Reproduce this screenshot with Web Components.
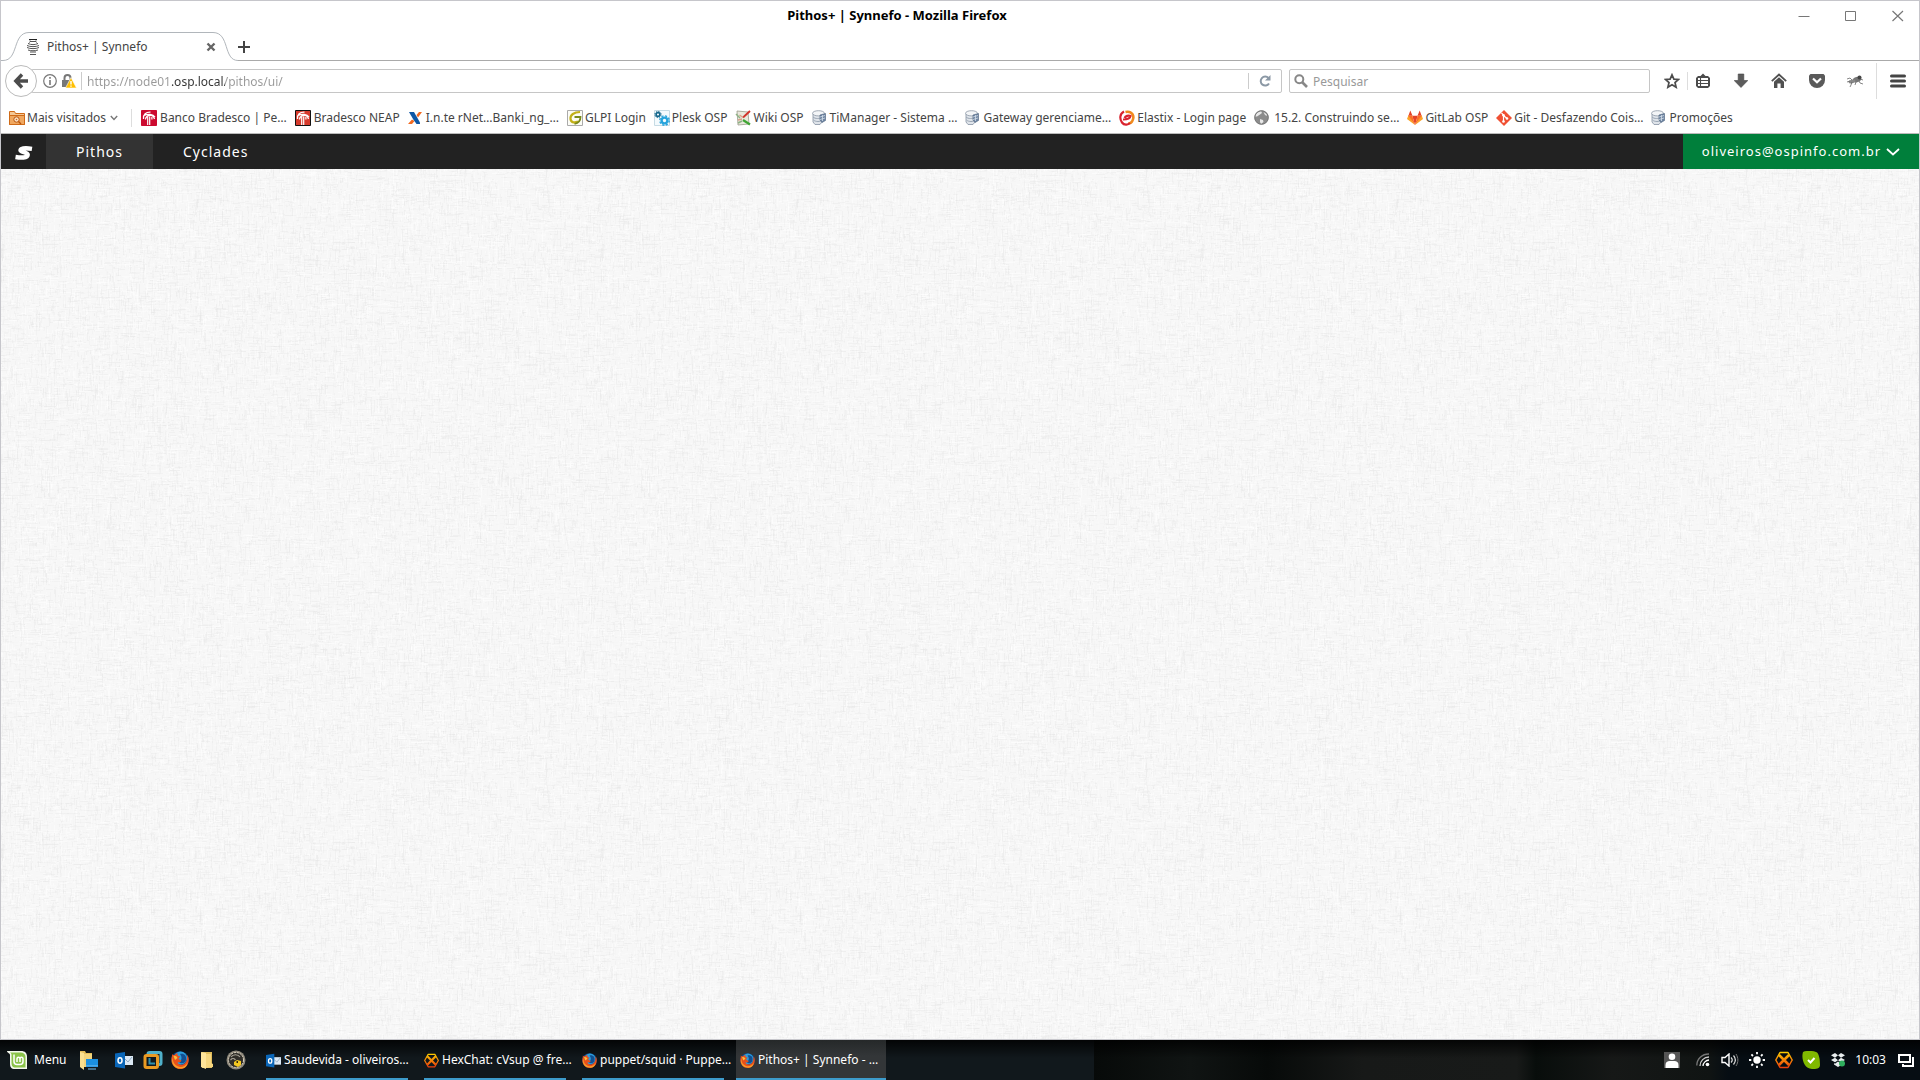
<!DOCTYPE html>
<html lang="pt-BR">
<head>
<meta charset="utf-8">
<title>Pithos+ | Synnefo</title>
<style>
html,body{height:100%;margin:0}
body{font:12px/16px "Noto Sans","Open Sans",sans-serif;color:#444;background:#0f1619;overflow:hidden}
</style>
</head>
<body>
<desk-top></desk-top>
<script>
const svg=(w,h,body)=>`<svg width="${w}" height="${h}" viewBox="0 0 ${w} ${h}" aria-hidden="true">${body}</svg>`;
const bradesco=(bg,edge)=>svg(16,16,`<path fill="${bg}" stroke="${edge}" d="M.5.5h15v15H.5z"/><path fill="none" stroke="#fff" stroke-width="1.300" d="M2.500 9C2 4.500 5 2 9.500 2.200M4.500 9.500C5 5 12 3.500 13.500 9M3 5.500C7 3.500 12 4 14 7"/><path fill="none" stroke="#fff" stroke-width="1.200" d="M6.700 7v8M8.700 6.500V15M10.900 7v2.500"/>`);
const barrel=svg(16,16,`<path fill="#dfe4ea" stroke="#8592a2" stroke-width=".8" d="M1 4v8l2 2.500h5l2-2.500V4z"/><ellipse cx="6.500" cy="3.300" rx="6" ry="2.600" fill="#f3f5f7" stroke="#8d98a6" stroke-width=".8"/><path fill="none" stroke="#9aa6b4" d="M1 7c2 2 7 2 9 0M1.500 10c2 2 7 2 8.500 0"/><path fill="#6f86a3" stroke="#4c617d" stroke-width=".6" d="M8 5l5.500-1.500v7L10 12.500 8 10z"/><path stroke="#d3dde8" stroke-width=".8" d="M8 7l5-1.500M8 9.500L13 8M10.500 5v6"/>`);
const outlook=s=>svg(s,s,`<g transform="scale(${s/18})"><path fill="#dce9f5" d="M9 5h9v9H9z"/><path fill="none" stroke="#8fa9c2" d="M10 8l3 3 4-5"/><path fill="#0a66b8" d="M0 2.500L10 1v16.500L0 16z"/><ellipse cx="5" cy="9.500" rx="2" ry="2.700" fill="none" stroke="#fff" stroke-width="1.500"/></g>`);
const firefox=s=>svg(s,s,`<g transform="scale(${s/18})"><circle cx="9" cy="9" r="8.700" fill="#0c4a8c"/><circle cx="9.500" cy="7" r="6.500" fill="#2d9edb"/><path fill="#124f91" d="M9 3c4-1 7 2 6 6s-5 4-7 2c2-1 4-4 1-8z"/><path fill="#e8501c" d="M1 3c0 2 0 2-.5 4C-.5 13 4 18 9 18c5 0 9-4 8.700-10C17.500 6 17 5 16 4c.5 3 0 8-4 9.500-3 1-5-.5-5.500-2l3-.5 1-1.500-3-1.500C8 6.500 9 6 9.300 5.500 7 5.500 6 4 6.500 2 5 2.500 4 3.500 3.500 4 2.500 4 1.500 4 1 3z"/><path fill="#fb9d25" d="M2 6c-1 5 2 9 7 10 4 0 6-2 7.500-4-1 5-5 6-8 5.500C4 17 1 14 1 9z"/><path fill="#f8c13c" d="M2.500 5c2-.5 3 .5 4 2L4 9z"/></g>`);
const hex=s=>svg(s,s,`<defs><linearGradient id="h" gradientUnits="userSpaceOnUse" x1="0" x2="0" y1="1" y2="17"><stop stop-color="#ffcf00"/><stop offset="1" stop-color="#ee3a0c"/></linearGradient></defs><g transform="scale(${s/18})" fill="none" stroke="url(#h)"><path stroke-width="1.500" stroke-linejoin="round" d="M5 1.500h8L17.200 9 13 16.500H5L.8 9z"/><path stroke-width="2.600" d="M4 4l10 10M14 4L4 14"/></g>`);
const ICONS={
pithos:svg(14,16,`<g fill="none" stroke="#555"><path stroke="#222" d="M3 .5h8"/><path d="M4 2.500h6M2 4.500C5 6 9 6 12 4.500M1 6.500C4 8 10 8 13 6.500M1 8.500c3 1.500 9 1.500 12 0M2 11c3 1 7 1 10 0M4 13h6M4 15.500h6"/><path stroke-width=".6" d="M4 1v2L2 5M10 1v2l2 2"/></g>`),
x:svg(10,10,`<path stroke="#666" stroke-width="2.400" d="M1.500 1.500l7 7M8.500 1.500l-7 7"/>`),
plus:svg(12,12,`<path stroke="#444" stroke-width="2" d="M6 0v12M0 6h12"/>`),
back:svg(16,16,`<path fill="none" stroke="#4c4c4c" stroke-width="3.400" d="M9 1.500L2.800 8 9 14.500M3 8h12"/>`),
info:svg(14,14,`<circle cx="7" cy="7" r="6.300" fill="none" stroke="#777" stroke-width="1.200"/><path fill="#777" d="M6.200 6h1.600v5H6.200zM6.200 3h1.600v1.700H6.200z"/>`),
lock:svg(16,14,`<path fill="none" stroke="#777" stroke-width="2" d="M3.500 6V4c0-4 6-4 6 0v2"/><path fill="#777" d="M1 6h10v7H1z"/><path fill="#ffbf00" stroke="#fff" stroke-width=".6" d="M10 3.500L15.500 14h-11z"/><path stroke="#fff" stroke-width="1.400" d="M10 7v3.500M10 11.500v1.300"/>`),
reload:svg(12,12,`<path fill="none" stroke="#8b98a5" stroke-width="2" d="M9.500 3A4.500 4.500 0 1 0 10 8.500"/><path fill="#8b98a5" d="M11.500 0v5.500H6z"/>`),
search:svg(14,14,`<circle cx="5.300" cy="5.300" r="4" fill="none" stroke="#888" stroke-width="2"/><path stroke="#888" stroke-width="2.600" d="M8 8l5 5"/>`),
star:svg(16,16,`<path fill="none" stroke="#4c4c4c" stroke-width="1.700" d="M8 1.800l1.900 4.300 4.600.4-3.500 3 1.100 4.700L8 11.700l-4.100 2.500L5 9.500l-3.500-3 4.600-.4z"/>`),
list:svg(16,16,`<path fill="#4c4c4c" fill-rule="evenodd" d="M3 3h2.500L8 .5 10.500 3H13l2 2v8l-2 2H3l-2-2V5zm0 2v8h10V5z"/><path fill="none" stroke="#4c4c4c" stroke-width="1.100" d="M3 7.500h10M3 10.500h10M5.500 5v8"/>`),
down:svg(14,16,`<path fill="#5c5c5c" stroke="#444" stroke-width=".6" d="M4.200 1h5.600v6.500h4L7 14.500.2 7.500h4z"/>`),
home:svg(16,16,`<path fill="none" stroke="#505050" stroke-width="1.800" d="M.8 8.200L8 1.500l7.200 6.700"/><path fill="#505050" d="M3 8.800l5-4.600 5 4.600V15H9.600v-4.500H6.400V15H3z"/>`),
pocket:svg(16,16,`<path fill="#5a5a5a" d="M1.500 1h13L16 2.500V7a8 8 0 0 1-16 0V2.500z"/><path fill="none" stroke="#fff" stroke-width="2.200" d="M4 5.500L8 9.300l4-3.800"/>`),
bug:svg(16,14,`<ellipse cx="10" cy="5.500" rx="4.500" ry="2.600" transform="rotate(-20 10 5.500)" fill="#777"/><circle cx="12.500" cy="3.500" r="2" fill="#444"/><ellipse cx="5" cy="7.500" rx="3.500" ry="1.800" transform="rotate(-15 5 7.500)" fill="#888"/><path fill="none" stroke="#666" stroke-width=".8" d="M5 8l-1 3-1 2M9 8l-1 3M12 7l1 2 3 1M5 6L3 4 0 5M3 7L0 8M13 5l3 1"/>`),
menu:svg(16,14,`<path stroke="#444" stroke-width="3" stroke-linecap="round" d="M1.500 2h13M1.500 7h13M1.500 12h13"/>`),
min:svg(12,12,`<path stroke="#777" d="M.5 6.500h11"/>`),
max:svg(12,12,`<path fill="none" stroke="#777" d="M.5 1.500h10v9H.5z"/>`),
close:svg(12,12,`<path stroke="#777" stroke-width="1.200" d="M.5 1l10.500 10M11 1L.5 11"/>`),
folder:svg(16,16,`<path fill="#f4c896" stroke="#cf6a17" d="M.5 1.500h5l1 2h9v11H.5z"/><path fill="#f0a860" stroke="#cf6a17" d="M.5 5.500h15v9H.5z"/><circle cx="7.500" cy="9.500" r="2.700" fill="#fbe3c8" stroke="#b9540c"/><circle cx="7.500" cy="9.500" r=".8" fill="#cf6a17"/><path stroke="#b9540c" stroke-width="1.400" d="M9.500 11.500l2.500 2.500"/>`),
chev:svg(8,6,`<path fill="none" stroke="#777" stroke-width="1.400" d="M.8 1L4 4.400 7.200 1"/>`),
bra1:bradesco('#cc092f','#cc092f'),bra2:bradesco('#d63a2c','#111'),
itau:svg(14,14,`<path fill="#f26a21" d="M8.500 4l2.500-3h3l-4 5.500zM0 13l4-4.500L6.500 10 4 13z"/><path fill="#0d57a6" d="M1 1h5l2 3.500 4 7V13H8.500L5 8z"/>`),
glpi:svg(16,16,`<path fill="#fcfcf6" stroke="#aaa" d="M.5.5h15v15H.5z"/><path fill="none" stroke="#c2b019" stroke-width="2.200" d="M13 2C7 2 3 5 3.500 9S8 13 11 11.500"/><path fill="none" stroke="#79891a" stroke-width="1.800" d="M7.500 7h6c0 3-2 6-6 7"/>`),
plesk:svg(16,16,`<path fill="#f4fafd" stroke="#c6dbe4" d="M.5.5h15v15H.5z"/><circle cx="4" cy="4.500" r="1.900" fill="none" stroke="#14678c" stroke-width="1.600"/><circle cx="4" cy="4.500" r="3.100" fill="none" stroke="#14678c" stroke-dasharray="1.300 1.130"/><circle cx="10.500" cy="10.500" r="2.900" fill="none" stroke="#27a4dc" stroke-width="2.400"/><circle cx="10.500" cy="10.500" r="4.700" fill="none" stroke="#27a4dc" stroke-width="1.400" stroke-dasharray="2.100 1.590"/>`),
wiki:svg(16,16,`<path fill="#e9e9dd" stroke="#9a9a8a" stroke-width=".8" d="M2 1l11 1 1 12-11 1z"/><path stroke="#8fb386" stroke-width="1.500" d="M1 4l4 4M3 13l4-2"/><path stroke="#d2322a" stroke-width="1.900" d="M15 1L8 7.500"/><path stroke="#d9a08a" stroke-width="1.500" fill="none" d="M8 7.500L4.500 5M3 10l4-1"/><path stroke="#3fa535" stroke-width="2.200" d="M8 10l7 4.500"/>`),
barrel,
elastix:svg(16,16,`<path fill="none" stroke="#f08a1d" stroke-width="2.600" d="M6.500 2C13 .5 16 6 13.300 11c-1 2-3 2.500-4 2.500"/><path fill="none" stroke="#d9232e" stroke-width="2.200" d="M5 1.500C.5 4 .5 9 3 12.500s6.500 2 8 .5M4 9.500c4 0 7-1 7.500-3.500-2-1-5 0-6 2"/>`),
globe:svg(16,16,`<circle cx="7.500" cy="7.500" r="7" fill="#8c8c8c"/><path fill="#e8e8e8" d="M3 3l4-2 1 2-2 1.500-3 2-2 0zM9.500 2l3 2 .5 2-2-1zM6 9l3 1 .5 2L7 14l-1-2z"/><circle cx="7.500" cy="7.500" r="6.800" fill="none" stroke="#777"/>`),
gitlab:svg(16,16,`<path fill="#fca326" d="M0 9l1.500-4L8 15zM16 9l-1.500-4L8 15z"/><path fill="#e24329" d="M1.400 5.800L3.300.5l2.200 5.300zM14.600 5.800L12.700.5l-2.200 5.300zM5.300 5.800h5.400L8 15z"/><path fill="#fc6d26" d="M1.300 5.800h4.100L8 15zM14.700 5.800h-4.100L8 15z"/>`),
git:svg(16,16,`<path fill="#f05033" d="M8 0l8 8-8 8-8-8z"/><path fill="none" stroke="#fff" stroke-width="1.200" d="M5.500 3l2 2v7M7.500 5.500l3.500 3"/><circle cx="7.500" cy="5.200" r="1.300" fill="#fff"/><circle cx="7.500" cy="11.500" r="1.300" fill="#fff"/><circle cx="11" cy="8.500" r="1.300" fill="#fff"/>`),
syn:svg(18,16,`<path fill="none" stroke="#fff" stroke-width="4.400" d="M17 3.800C12 3 6 2.600 5.500 5.200c-.3 2 7.300 2 7.200 4.600-.2 3.300-7 3-12.200 2.200"/>`),
chevw:svg(14,8,`<path fill="none" stroke="#fff" stroke-width="1.800" d="M1 1l6 5.500L13 1"/>`),
mint:svg(20,20,`<path fill="#f4f8ee" d="M0 1h14c4 0 6 2 6 6v12H8c-4 0-5-2-5-6V5C3 3 0 3 0 1z"/><path fill="#8bc34a" d="M3 2.500h10.500c3 0 5 1.500 5 4.500v10.500H8.500c-3 0-4-1.500-4-5V5C4.500 3.800 4 3 3 2.500z"/><path fill="none" stroke="#fff" stroke-width="1.500" d="M7 4.500v7c0 2 1 3 3 3h3c2 0 3-1 3-3V9c0-2.500-3-2.500-3 0v3M13 9c0-2.500-3-2.500-3 0v3"/>`),
files:svg(20,20,`<path fill="#e3bd5a" d="M1 1h5l1 2h6v14H1z"/><path fill="#fbe08f" d="M1 2l4 1v17l-4-3z"/><path fill="#f3d47b" d="M5 4h8v13H5z"/><path fill="#1b8fe0" d="M7 9h12v8H7z"/><path fill="#7cc4f2" d="M9 18.500h8v1H9zM7 15.500h12v.8H7z"/>`),
outlook:outlook(18),outlooks:outlook(15),
vm:svg(20,20,`<path fill="none" stroke="#4fb0ca" stroke-width="3" d="M5 7V4c0-1 .5-1.500 1.500-1.500h10c1 0 1.500.5 1.500 1.500v9c0 1-.5 1.500-1.500 1.500H14"/><rect x="2" y="5.500" width="12.500" height="12" rx="1.500" fill="none" stroke="#e99a23" stroke-width="3"/><path fill="none" stroke="#2f8fae" stroke-width="2" d="M6.500 8v5.500H12"/>`),
ff:firefox(18),ffs:firefox(15),
fold:svg(12,18,`<path fill="#e0bc5b" d="M1 1h10v16H1z"/><path fill="#ffe49a" d="M0 1l5 1v16l-5-2z"/><path fill="#f6d67f" d="M5 3h5v9l2 1v3l-7 1z"/>`),
coin:svg(20,20,`<circle cx="10" cy="10" r="9.500" fill="#8f897c"/><circle cx="10" cy="10" r="7.500" fill="#302e29" stroke="#dcd5c4" stroke-width="1" stroke-dasharray="2 1"/><path fill="none" stroke="#a9a498" stroke-width="1.200" d="M5 7c2-3 7-3 9 0M4.500 10c2-2 3-2 5 0"/><path fill="#f4c821" d="M8 12l3-2 4 1v4l-3 2-4-2z"/><path fill="#352a08" d="M10.500 11h1.500v2h-1.500z"/>`),
hex:hex(18),hexs:hex(15),
user:svg(16,16,`<path fill="#555" d="M0 0h16v16H0z"/><circle cx="8" cy="4.800" r="3.300" fill="#fff"/><path fill="#fff" d="M1.500 16v-3c0-3 2-4 4-4h5c2 0 4 1 4 4v3z"/>`),
wifi:svg(14,14,`<g fill="none" stroke-width="1.300"><path stroke="#777" d="M.8 12.500C.8 6 6 1 13 1"/><path stroke="#ccc" d="M4 13c0-5 4-9 9-9"/><path stroke="#fff" d="M7 13c0-3 3-6 6-6"/></g><circle cx="11.500" cy="11.500" r="1.800" fill="#fff"/>`),
vol:svg(18,14,`<path fill="none" stroke="#fff" stroke-width="1.400" d="M1 4.500h3l4-3.500v12L4 9.500H1z"/><path fill="none" stroke="#ddd" stroke-width="1.200" d="M10 4.500c1.500 1.500 1.500 3.500 0 5M12.500 2.500c2.500 3 2.500 6 0 9"/><path fill="none" stroke="#777" d="M15 1c2.500 4 2.500 8 0 12"/>`),
sun:svg(16,16,`<circle cx="8" cy="8" r="3.700" fill="#fff"/><path stroke="#fff" stroke-width="1.800" d="M8 0v2.300M8 13.700V16M0 8h2.300M13.700 8H16M2.400 2.400L4 4M12 12l1.600 1.600M13.600 2.400L12 4M4 12l-1.600 1.600"/>`),
sky:svg(18,18,`<path fill="#80b900" d="M1 1c3-1.500 9-1.500 13 0 3 1 4 7 4 13 0 4-4 4-8 4C2 18-1 7 1 1z"/><path fill="none" stroke="#fff" stroke-width="2" d="M6 9l2.500 2.500L12.500 7"/>`),
drop:svg(14,16,`<path fill="#e8edee" d="M4 1l3 2.300-3 2.500L0 3.300zM10 1l4 2.300-4 2.500-3-2.500zM0 8l4-2.200 3 2.500-3 2zM14 8l-4-2.200-3 2.500 3 2zM3 11l1 .7 3-2.300 3 2.300 1-.7v1.500L7 15l-4-2.500z"/><circle cx="11" cy="11.500" r="3" fill="#2fae5d"/>`),
screens:svg(16,13,`<path fill="none" stroke="#fff" stroke-width="2" d="M1 1h11v7H1zM14 4h1v8H5v-2"/>`)
};
const define=(name,css,html,after)=>customElements.define(name,class extends HTMLElement{
  constructor(){super();this.attachShadow({mode:'open'})}
  connectedCallback(){
    this.shadowRoot.innerHTML=`<style>*{box-sizing:border-box}button,input{font:inherit;color:inherit;background:none;border:0;padding:0;margin:0;outline:0}a{color:inherit;text-decoration:none}${css}</style>${typeof html==='function'?html(this):html}`;
    if(after)after(this);
  }
});
const mark=(n,t,g='')=>`<book-mark icon="${n}" ${g}>${t}</book-mark>`;

define('ui-icon',':host{display:inline-flex;flex:none}svg{display:block}',el=>ICONS[el.getAttribute('name')]);

define('desk-top',':host{display:grid;grid-template-rows:minmax(0,1fr) 40px;height:100vh}',
'<browser-window></browser-window><task-bar></task-bar>');

define('browser-window',`:host{display:flex;flex-direction:column;min-height:0;background:#fff;border:1px solid #c6c6cb}
title-bar,tab-strip,nav-bar,bookmark-bar,cloud-bar{flex:none;box-sizing:border-box}linen-page{flex:1 1 0}`,
'<title-bar></title-bar><tab-strip></tab-strip><nav-bar></nav-bar><bookmark-bar></bookmark-bar><cloud-bar></cloud-bar><linen-page></linen-page>');

define('title-bar',`:host{display:grid;grid-template-columns:1fr auto 1fr;height:30px;color:#000}
h1{font:bold 13px/28px "Noto Sans",sans-serif;margin:0;padding-right:126px}
div{display:flex;justify-content:flex-end;align-items:center;gap:35px;padding-right:15px}
button{width:12px;height:12px;display:flex}`,
`<span></span><h1>Pithos+ | Synnefo - Mozilla Firefox</h1><div><button aria-label="Minimizar"><ui-icon name="min"></ui-icon></button><button aria-label="Maximizar"><ui-icon name="max"></ui-icon></button><button aria-label="Fechar"><ui-icon name="close"></ui-icon></button></div>`);

define('tab-strip',`:host{display:flex;height:30px}
.tab{display:grid;width:237px}.tab>*{grid-area:1/1}
.in{display:flex;align-items:center;padding:2px 22px 0 25px;gap:7px;height:30px}.in span{flex:1}
button{display:flex}.rest{flex:1;display:flex;align-items:center;padding-top:2px;border-bottom:1px solid #aaa}`,
`<div class="tab">${svg(237,30,'<path fill="none" stroke="#b1b6bb" d="M0 29.500h2C18 29.500 11 1.500 28 1.500h184C229 1.500 222 29.500 237 29.500"/>')}<div class="in"><ui-icon name="pithos"></ui-icon><span>Pithos+ | Synnefo</span><button aria-label="Fechar aba"><ui-icon name="x"></ui-icon></button></div></div><div class="rest"><button aria-label="Nova aba"><ui-icon name="plus"></ui-icon></button></div>`);

define('nav-bar',`:host{display:flex;align-items:center;height:40px;padding:0 13px 0 4px}
.back{width:32px;height:32px;border:1px solid #bbb;border-radius:50%;display:flex;align-items:center;justify-content:center;background:#fff;z-index:1;flex:none}
.url{flex:1;display:flex;align-items:center;height:24px;border:1px solid #c6c6c6;border-radius:2px;margin-left:-6px;padding-left:11px;gap:4px}
.url input{flex:1;height:18px;padding:1px 0 0 5px;border-left:1px solid #ccc;color:#999;-webkit-text-fill-color:transparent;background:linear-gradient(90deg,#999 90px,#333 90px 143px,#999 143px) text}
.reload{width:33px;height:16px;border-left:1px solid #ccc;display:flex;align-items:center;justify-content:center}
.find{width:361px;height:24px;border:1px solid #c6c6c6;border-radius:2px;margin-left:7px;display:flex;align-items:center;padding-left:4px;gap:5px}
.find input{flex:1;height:18px;padding-top:1px}.find input::placeholder{color:#999;opacity:1}
.tools{display:flex;align-items:center;padding-left:14px}
.tools button{display:flex;justify-content:center;width:38px}.tools .star{width:16px}.sep{width:1px;height:18px;background:#ddd;margin-left:7px;margin-right:-4px}.tools .tall{height:36px;margin:0 13px 0 2px}.tools .menu{width:16px}`,
`<button class="back" aria-label="Voltar"><ui-icon name="back"></ui-icon></button>
<div class="url"><ui-icon name="info"></ui-icon><ui-icon name="lock"></ui-icon><input aria-label="Endereço" value="https://node01.osp.local/pithos/ui/"><button class="reload" aria-label="Recarregar"><ui-icon name="reload"></ui-icon></button></div>
<div class="find"><ui-icon name="search"></ui-icon><input aria-label="Pesquisar" placeholder="Pesquisar"></div>
<div class="tools"><button class="star" aria-label="Favoritar"><ui-icon name="star"></ui-icon></button><span class="sep"></span>${['list','down','home','pocket','bug'].map(n=>`<button aria-label="${n}"><ui-icon name="${n}"></ui-icon></button>`).join('')}<span class="sep tall"></span><button class="menu" aria-label="Menu"><ui-icon name="menu"></ui-icon></button></div>`);

define('book-mark',`:host{display:block;flex:none}a{display:flex;align-items:center;gap:var(--gap,2px);white-space:nowrap}`,
el=>`<a href="#"><ui-icon name="${el.getAttribute('icon')}"></ui-icon><span><slot></slot></span></a>`);

define('bookmark-bar',`:host{display:flex;align-items:center;height:33px;padding:2px 8px 0;gap:8px;border-bottom:1px solid #bbb}
.most{display:flex;align-items:center;gap:4px}.sep{width:1px;height:18px;background:#ddd;margin:0 1px 0 5px}.mid{--gap:3px}.wide{--gap:4px}`,
`<div class="most"><book-mark icon="folder">Mais visitados</book-mark><ui-icon name="chev"></ui-icon></div><span class="sep"></span>`+
mark('bra1','Banco Bradesco | Pe…','class="mid"')+mark('bra2','Bradesco NEAP','class="mid"')+mark('itau','I.n.te rNet…Banki_ng_…','class="wide"')+mark('glpi','GLPI Login')+mark('plesk','Plesk OSP')+mark('wiki','Wiki OSP')+mark('barrel','TiManager - Sistema …')+mark('barrel','Gateway gerenciame…')+mark('elastix','Elastix - Login page')+mark('globe','15.2. Construindo se…','class="wide"')+mark('gitlab','GitLab OSP')+mark('git','Git - Desfazendo Cois…')+mark('barrel','Promoções'));

define('cloud-bar',`:host{display:flex;height:35px;background:#222;color:#fff;font-size:14px;line-height:35px;letter-spacing:1px}
a{display:block}.logo{width:45px;display:flex;align-items:center;justify-content:center}.logo ui-icon{padding-top:2px}
.on{background:#333}.nav{padding:0 30px}.me{margin-left:auto;background:#007f3b;font-size:13px;padding:0 19px;display:flex;align-items:center;gap:5px}`,
`<a class="logo" href="#" aria-label="Synnefo"><ui-icon name="syn"></ui-icon></a><a class="nav on" href="#">Pithos</a><a class="nav" href="#">Cyclades</a><a class="me" href="#"><span>oliveiros@ospinfo.com.br</span><ui-icon name="chevw"></ui-icon></a>`);

define('linen-page',':host{display:block;min-height:0;overflow:hidden;background:#f7f7f7}canvas{display:block}','<canvas></canvas>',el=>{
  const c=el.shadowRoot.querySelector('canvas'),tile=document.createElement('canvas'),n=600,t=tile.getContext('2d');
  tile.width=tile.height=n;
  let s=77;const r=()=>{s=s+0x6D2B79F5|0;let q=Math.imul(s^s>>>15,1|s);q=q+Math.imul(q^q>>>7,61|q)^q;return((q^q>>>14)>>>0)/4294967296};
  t.fillStyle='#f7f7f7';t.fillRect(0,0,n,n);
  for(let i=0;i<75000;i++){
    const len=2+Math.floor(r()*r()*15),x=Math.floor(r()*n),y=Math.floor(r()*n),v=r()<.5;
    t.fillStyle=r()<.5?`rgba(255,255,255,${r()*.5})`:`rgba(230,230,230,${r()*.4})`;
    for(const dx of [0,-n])for(const dy of [0,-n])t.fillRect(x+dx,y+dy,v?1:len,v?len:1);
  }
  const paint=()=>{c.width=el.clientWidth;c.height=el.clientHeight;const g=c.getContext('2d');g.fillStyle=g.createPattern(tile,'repeat');g.fillRect(0,0,c.width,c.height)};
  requestAnimationFrame(paint);addEventListener('resize',paint);
});

define('task-item',`:host{display:block;width:150px;height:40px;padding:0 4px;box-sizing:border-box}
:host([active]){background:linear-gradient(#252829,#333638 40%);box-shadow:inset 0 -2px #3d9bcb}
button{display:flex;align-items:center;gap:3px;width:100%;height:40px;white-space:nowrap}
:host(:not([active])) button{border-bottom:2px solid #3d9bcb;padding-top:2px}`,
el=>`<button><ui-icon name="${el.getAttribute('icon')}"></ui-icon><span><slot></slot></span></button>`);

define('task-bar',`:host{display:flex;align-items:center;height:40px;color:#fff;background:linear-gradient(#000000d0,#0000 18px),linear-gradient(90deg,#11181c 0 57%,#070a09 57%,#101413 62%,#070a09 66%,#171918 71%,#181a19 79%,#080d0b 80%,#161817 84%,#101413 89%,#060d13 90%)}
button{display:flex;align-items:center;flex:none}
.menu{gap:7px;padding-left:7px;width:79px}.quick{display:flex;align-items:center;width:183px}
.quick button{width:28px}.quick .first{width:36px}.quick .fold{width:27px;padding-left:2px}
.tasks{display:flex;gap:8px;flex:1}
.tray{display:flex;align-items:center;padding-right:6px}.tray button{width:27px;justify-content:center}.tray .user{width:34px}.tray time{padding:0 12px 0 4px}.tray .end{width:16px}`,
`<button class="menu"><ui-icon name="mint"></ui-icon><span>Menu</span></button>
<div class="quick"><button class="first" aria-label="Arquivos"><ui-icon name="files"></ui-icon></button><button aria-label="Outlook"><ui-icon name="outlook"></ui-icon></button><button aria-label="VMware"><ui-icon name="vm"></ui-icon></button><button aria-label="Firefox"><ui-icon name="ff"></ui-icon></button><button class="fold" aria-label="Pasta"><ui-icon name="fold"></ui-icon></button><button aria-label="Cofre"><ui-icon name="coin"></ui-icon></button></div>
<div class="tasks"><task-item icon="outlooks">Saudevida - oliveiros…</task-item><task-item icon="hexs">HexChat: cVsup @ fre…</task-item><task-item icon="ffs">puppet/squid · Puppe…</task-item><task-item icon="ffs" active>Pithos+ | Synnefo - …</task-item></div>
<div class="tray"><button class="user" aria-label="Usuário"><ui-icon name="user"></ui-icon></button>${['wifi','vol','sun','hex','sky','drop'].map(n=>`<button aria-label="${n}"><ui-icon name="${n}"></ui-icon></button>`).join('')}<time>10:03</time><button class="end" aria-label="Janelas"><ui-icon name="screens"></ui-icon></button></div>`);
</script>
</body>
</html>
